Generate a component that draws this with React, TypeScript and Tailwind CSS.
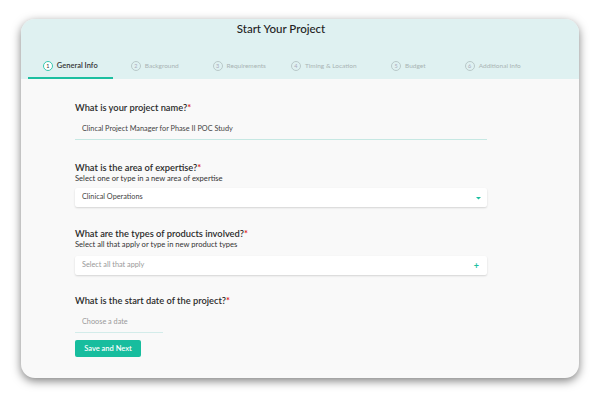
import React from 'react';

const STEPS = [
  'General Info',
  'Background',
  'Requirements',
  'Timing & Location',
  'Budget',
  'Additional Info',
];

function Label({ text, help }: { text: string; help?: string }) {
  return (
    <div>
      <div className="text-[9.3px] leading-[12px] font-semibold text-[#2b2b2b]">
        {text}
        <span className="text-[#e02020]">*</span>
      </div>
      {help && <div className="text-[7.6px] leading-[9px] text-[#333]">{help}</div>}
    </div>
  );
}

export default function App() {
  return (
    <div
      className="w-[600px] h-[400px] bg-white pt-[19px] pl-[21px]"
      style={{ fontFamily: 'Lato, "Noto Sans", sans-serif' }}
    >
      <div className="w-[558px] h-[359px] rounded-[14px] overflow-hidden bg-[#f9f9f9] shadow-[0_3px_10px_rgba(0,0,0,0.5)]">
        <div className="h-[60px] bg-[#dff1f1] flex flex-col">
          <div className="h-[20px] leading-[20px] text-center pr-[38px] text-[11.5px] font-medium text-[#222]">
            Start Your Project
          </div>
          <div className="mt-auto ml-[7px] w-[507px] grid grid-cols-6">
            {STEPS.map((s, i) => {
              const active = i === 0;
              return (
                <div
                  key={s}
                  className={
                    'h-[24px] flex items-center justify-center gap-[4px] border-b-2 ' +
                    (active ? 'border-[#1cbfa0]' : 'border-transparent')
                  }
                >
                  <span
                    className={
                      'w-[10px] h-[10px] rounded-full flex items-center justify-center text-[5.5px] ' +
                      (active
                        ? 'border border-[#37c9b0] text-[#333] bg-white'
                        : 'border border-[#b9c9c9] text-[#aab]')
                    }
                  >
                    {i + 1}
                  </span>
                  <span
                    className={
                      active
                        ? 'text-[7.5px] font-semibold text-[#333]'
                        : 'text-[6.5px] text-[#a9b4b4]'
                    }
                  >
                    {s}
                  </span>
                </div>
              );
            })}
          </div>
        </div>

        <div className="pl-[54px] w-[466px] flex flex-col">
          <div className="mt-[23px]">
            <Label text="What is your project name?" />
          </div>
          <div className="mt-[5px] h-[21px] flex items-center px-[7px] text-[7.3px] text-[#444] border-b-[1.5px] border-[#c6e8e3]">
            Clincal Project Manager for Phase II POC Study
          </div>

          <div className="mt-[22px]">
            <Label
              text="What is the area of expertise?"
              help="Select one or type in a new area of expertise"
            />
          </div>
          <div className="mt-[5px] h-[19px] flex items-center justify-between px-[7px] bg-white rounded-[2px] shadow-[0_1px_2px_rgba(0,0,0,0.15)]">
            <span className="text-[7.3px] text-[#444]">Clinical Operations</span>
            <svg width="5" height="4" viewBox="0 0 5 4" className="mr-[-1px]">
              <path d="M0 1 L5 1 L2.5 3.5 Z" fill="#1cbfa0" />
            </svg>
          </div>

          <div className="mt-[21px]">
            <Label
              text="What are the types of products involved?"
              help="Select all that apply or type in new product types"
            />
          </div>
          <div className="mt-[7px] h-[19px] flex items-center justify-between px-[7px] bg-white rounded-[2px] shadow-[0_1px_2px_rgba(0,0,0,0.15)]">
            <span className="text-[7.3px] text-[#999]">Select all that apply</span>
            <span className="text-[#1cbfa0] text-[9px] font-bold leading-none mr-[1px]">+</span>
          </div>

          <div className="mt-[20px]">
            <Label text="What is the start date of the project?" />
          </div>
          <div className="mt-[6px] w-[88px] h-[20px] flex items-center px-[7px] text-[7.3px] text-[#999] border-b-[1.5px] border-[#d3ecea]">
            Choose a date
          </div>
          <button className="mt-[7px] w-[66px] h-[17px] rounded-[2px] bg-[#17bd9e] text-white text-[7.5px] font-semibold">
            Save and Next
          </button>
        </div>
      </div>
    </div>
  );
}
